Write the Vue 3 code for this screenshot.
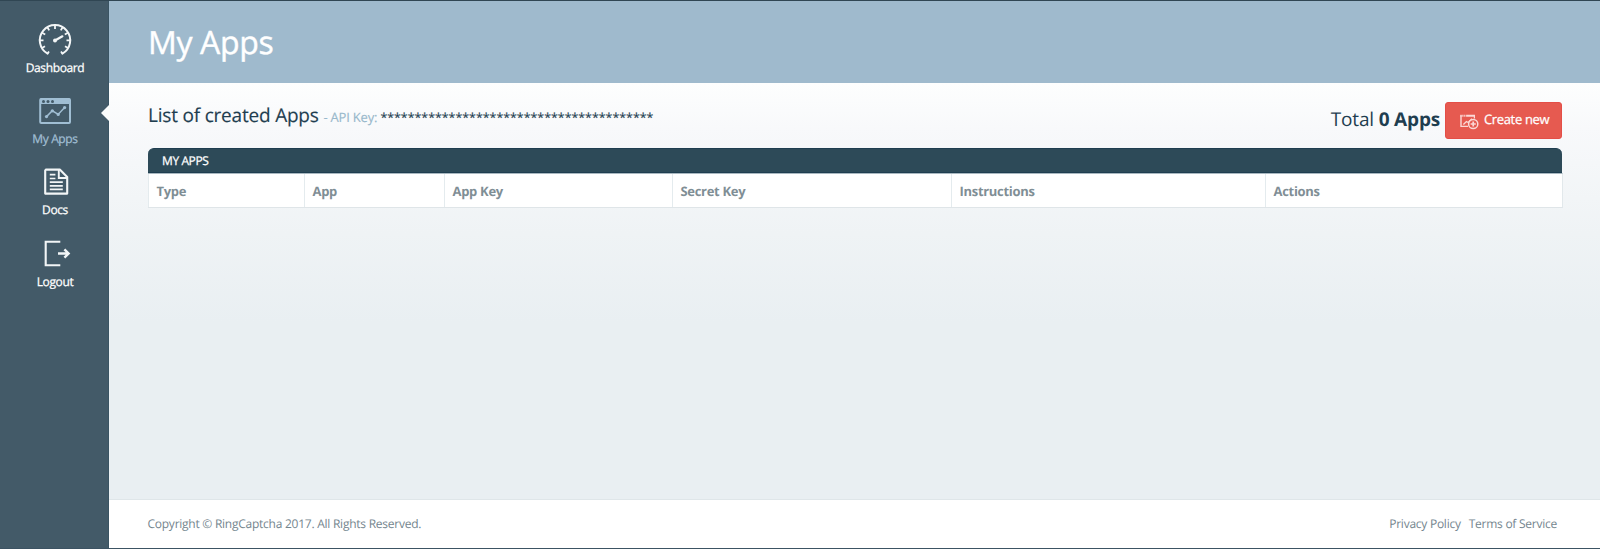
<script setup>
const columns = [
  { label: 'Type', width: 156 },
  { label: 'App', width: 140 },
  { label: 'App Key', width: 228 },
  { label: 'Secret Key', width: 279 },
  { label: 'Instructions', width: 314 },
  { label: 'Actions', width: 297 },
]
const apiKey = '*'.repeat(40)
</script>

<template>
  <div class="page">
    <nav class="sidebar">
      <a class="item">
        <svg class="icon" width="36" height="34" viewBox="0 0 36 34" fill="none" stroke="currentColor">
          <path d="M10.6 30.6A15.2 15.2 0 1 1 25.4 30.6" stroke-width="2" stroke-linecap="round" />
          <path d="M18 2v4M10.4 4.2l1.8 3.2M25.6 4.2l-1.8 3.2M5 9.7l3.2 1.9M31 9.7l-3.2 1.9M3 17.3h3.5M33 17.3h-3.5M5 25l3-1.8M31 25l-3-1.8M10.6 30.6l1.4-2M25.4 30.6l-1.4-2" stroke-width="1.8" />
          <path d="M18 17.5l7.4-4.2" stroke-width="2.2" stroke-linecap="round" />
          <circle cx="18" cy="17.5" r="2" fill="currentColor" stroke="none" />
        </svg>
        <span>Dashboard</span>
      </a>
      <a class="item active">
        <svg class="icon" width="36" height="34" viewBox="0 0 36 34" fill="none" stroke="currentColor">
          <rect x="3.2" y="5" width="29.8" height="24" rx="1" stroke-width="2" />
          <path d="M3 4.5h30v5.5H3z" fill="currentColor" stroke="none" />
          <g class="dots"><circle cx="6.5" cy="7.4" r="1.5" /><circle cx="11" cy="7.4" r="1.5" /><circle cx="15.5" cy="7.4" r="1.5" /></g>
          <path d="M9.5 22.6l5.8-5.8 5.9 3.6 6.4-7" stroke-width="1.5" />
          <g fill="currentColor" stroke="none"><circle cx="9.5" cy="22.6" r="1.6" /><circle cx="15.3" cy="16.8" r="1.6" /><circle cx="21.2" cy="20.4" r="1.6" /><circle cx="27.6" cy="13.6" r="1.6" /></g>
        </svg>
        <span>My Apps</span>
        <i class="pointer"></i>
      </a>
      <a class="item">
        <svg class="icon" width="36" height="34" viewBox="0 0 36 34" fill="none" stroke="currentColor">
          <path d="M9 4.6h13.8L30.2 12v16.6H8.2V5.4z" stroke-width="2.1" stroke-linejoin="round" />
          <path d="M21.8 5v8h8.4" stroke-width="1.9" />
          <path d="M12.8 9.6h5.6M12.8 13.5h5.6M12.8 17.2h13M12.8 20.8h13M12.8 24.4h13" stroke-width="1.7" />
        </svg>
        <span>Docs</span>
      </a>
      <a class="item">
        <svg class="icon" width="36" height="34" viewBox="0 0 36 34" fill="none" stroke="currentColor" stroke-width="2.1">
          <path d="M23.3 4.8H8.7v23.4h14.6" />
          <path d="M21 16.5h11M27.4 12.3l4.2 4.2-4.2 4.2" stroke-width="2.4" />
        </svg>
        <span>Logout</span>
      </a>
    </nav>

    <div class="main">
      <header class="banner"><h1>My Apps</h1></header>
      <main class="content">
        <div class="heading">
          <h2>List of created Apps <small>- API Key: <b>{{ apiKey }}</b></small></h2>
          <div class="summary">
            <span class="total">Total <strong>0 Apps</strong></span>
            <button class="create">
              <svg width="19" height="16" viewBox="0 0 19 16" fill="none" stroke="currentColor">
                <path d="M8 12.4H1V1.2" stroke-width="1.4" />
                <path d="M14.4 1v3.6" stroke-width="1.2" />
                <path d="M.4 1.8h14.6" stroke-width="2" stroke-dasharray="1.2 .7 1.2 .7 1.2 .7 20" />
                <path d="M3.4 10.5l3-3 1.8 1L12 4.8" stroke-width="1.3" />
                <circle cx="13.2" cy="10" r="4.6" stroke-width="1.5" />
                <path d="M13.2 7.4v5.2M10.6 10h5.2" stroke-width="1.7" />
              </svg>
              <span>Create new</span>
            </button>
          </div>
        </div>
        <section class="panel">
          <h3>MY APPS</h3>
          <table>
            <colgroup><col v-for="c in columns" :key="c.label" :style="{ width: c.width + 'px' }" /></colgroup>
            <thead><tr><th v-for="c in columns" :key="c.label">{{ c.label }}</th></tr></thead>
          </table>
        </section>
      </main>
      <footer class="footer">
        <span>Copyright © RingCaptcha 2017. All Rights Reserved.</span>
        <span class="links"><a>Privacy Policy</a><a>Terms of Service</a></span>
      </footer>
    </div>
  </div>
</template>

<style>
body { margin: 0; overflow: hidden; }
</style>

<style scoped>
* { box-sizing: border-box; }
.page {
  display: flex;
  height: 549px;
  border-top: 1px solid #304653;
  border-bottom: 1px solid #3c5363;
  font-family: "Open Sans", "Noto Sans", sans-serif;
  color: #1f3e50;
  text-rendering: geometricPrecision;
}
.sidebar {
  width: 109px;
  flex: none;
  padding: 21.5px 0 0 2px;
  background: #435a68;
  border-right: 1px solid #3a5463;
}
.item {
  position: relative;
  display: flex;
  flex-direction: column;
  align-items: center;
  height: 71.4px;
  color: #fff;
  font-size: 12px;
  letter-spacing: -.38px;
  line-height: 16px;
  -webkit-text-stroke: .25px;
}
.item span { margin-top: 3px; }
.icon { color: #f2f5f6; }
.active, .active .icon { color: #a0bed3; }
.dots { fill: #435a68; stroke: none; }
.pointer {
  position: absolute;
  right: -2px;
  top: 10px;
  border: 9px solid transparent;
  border-left: 0;
  border-right-color: #fbfcfc;
}
.main { flex: 1; display: flex; flex-direction: column; min-width: 0; }
.banner { height: 82px; padding-left: 39px; background: #9fbacd; }
h1 {
  margin: 0;
  color: #fff;
  font-size: 32px;
  font-weight: 400;
  line-height: 83px;
  letter-spacing: -.35px;
  -webkit-text-stroke: .4px;
}
.content {
  flex: 1;
  padding: 19px 38px 0 39px;
  background: linear-gradient(#fdfefe 0, #f8f9fb 45px, #eff3f5 150px, #e9eff2 240px);
}
.heading { display: flex; justify-content: space-between; height: 46px; }
h2 {
  margin: 0;
  font-size: 19px;
  font-weight: 400;
  line-height: 27px;
  letter-spacing: -.2px;
  -webkit-text-stroke: .15px;
}
small { color: #98b8cb; font-size: 13px; }
small b { color: #1f3e50; font-weight: 400; font-size: 12.4px; letter-spacing: 0; }
.summary { display: flex; align-items: flex-start; gap: 5px; }
.total { font-size: 19px; line-height: 34px; letter-spacing: -.18px; }
.create {
  display: flex;
  align-items: center;
  gap: 5px;
  width: 117px;
  height: 37px;
  padding: 0 0 0 14px;
  border: 1px solid #e44e47;
  border-radius: 3px;
  background: #e65a50;
  color: #fff;
  font: 13px "Open Sans", sans-serif;
  letter-spacing: -.35px;
  white-space: nowrap;
  text-rendering: geometricPrecision;
  -webkit-text-stroke: .25px;
}
.create svg { margin-top: 2px; color: #fbd9d6; }
.create span { margin-top: -3px; }
h3 {
  margin: 0;
  height: 25px;
  padding-left: 14px;
  border-top: 1px solid #1f3e50;
  border-bottom: 1px solid #1f3e50;
  border-radius: 6px 6px 0 0;
  background: #2d4a58;
  color: #fff;
  font-size: 12px;
  font-weight: 400;
  line-height: 24px;
  letter-spacing: -.4px;
  -webkit-text-stroke: .25px;
}
table {
  width: 100%;
  table-layout: fixed;
  border-spacing: 0;
  background: #fff;
  border-top: 1px solid #a9b8c0;
  border-right: 1px solid #e2e8eb;
  border-bottom: 1px solid #dfe5e8;
}
th {
  height: 33px;
  padding: 0 0 0 7.5px;
  border-left: 1px solid #e4ebee;
  color: #7f8e95;
  font-size: 13px;
  font-weight: 700;
  line-height: 32px;
  letter-spacing: -.3px;
  text-align: left;
}
.footer {
  display: flex;
  justify-content: space-between;
  height: 49px;
  padding: 0 43px 0 38.5px;
  border-top: 1px solid #dfe6e9;
  background: #fff;
  color: #74858e;
  font-size: 12px;
  line-height: 48px;
  letter-spacing: -.25px;
}
.links { display: flex; gap: 8px; }
</style>
